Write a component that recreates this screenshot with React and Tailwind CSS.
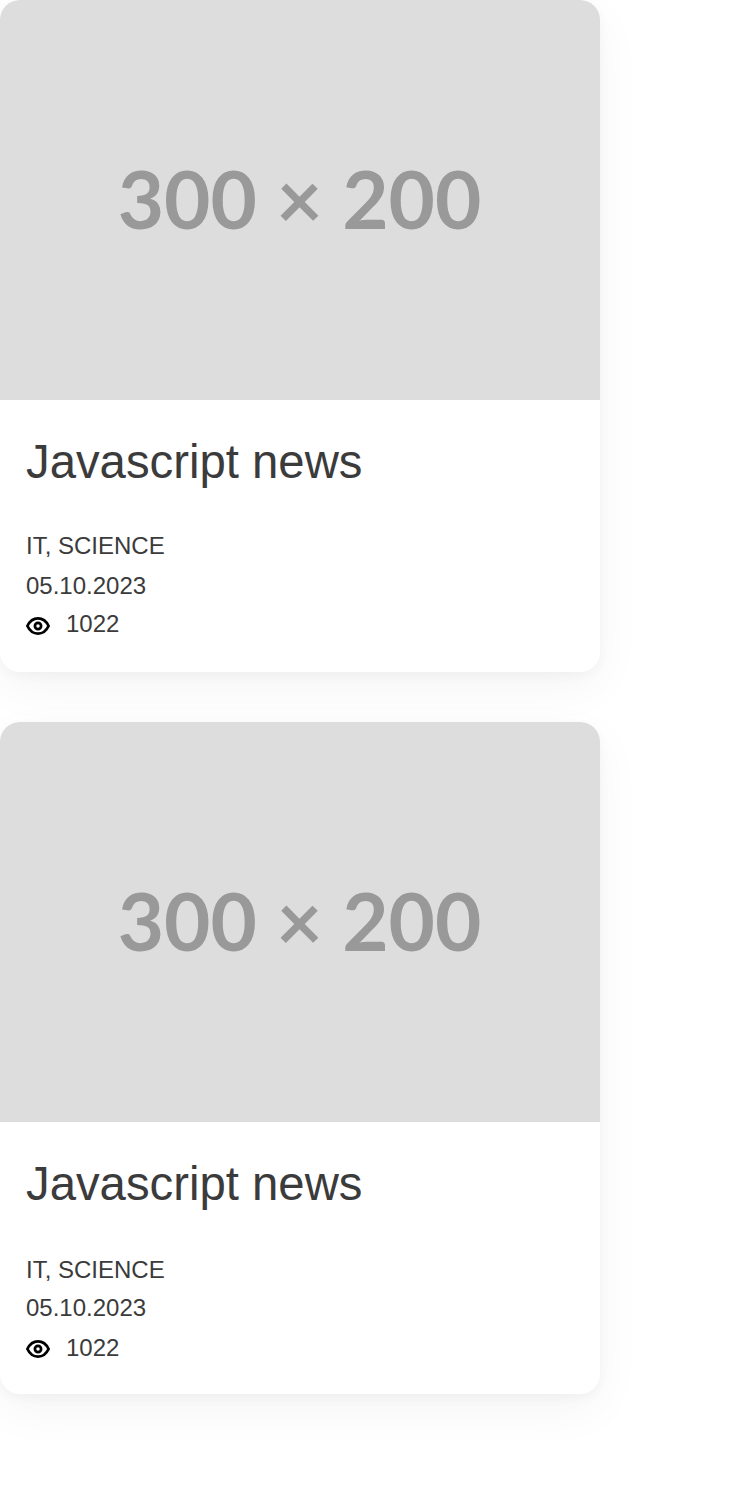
function Eye() {
  return (
    <svg className="h-6 w-6 shrink-0" viewBox="0 0 24 24" fill="none" stroke="#000">
      <path d="M1.4 12C3.7 7.200 7.5 4.400 12 4.400S20.300 7.200 22.600 12C20.300 16.800 16.500 19.600 12 19.600S3.700 16.800 1.400 12Z" strokeWidth="2.8" strokeLinejoin="round" />
      <circle cx="12" cy="12" r="3.1" strokeWidth="2.700" />
    </svg>
  );
}

function Card({ second }) {
  return (
    <article className="h-[672px] w-[600px] overflow-hidden rounded-[20px] bg-white text-[#3b3b3b] shadow-[0_4px_12px_rgba(0,0,0,0.035),0_16px_48px_rgba(0,0,0,0.045)]">
      <div className="flex h-[400px] items-center justify-center bg-[#ddd] pr-px pb-1 font-['Lato',sans-serif] text-[80px] leading-none font-bold text-[#999]">
        <span>300 × 200</span>
      </div>
      <div className="px-[26px] pt-[34px]">
        <h2 className="text-[47.3px] leading-[56px]">Javascript news</h2>
        <div className={second ? "pt-[44px]" : "pt-[42px]"}>
          <p className="text-2xl leading-7">IT, SCIENCE</p>
          <p className={second ? "mt-[10px] text-2xl leading-7" : "mt-3 text-2xl leading-7"}>05.10.2023</p>
          <div className={second ? "mt-3 flex gap-4" : "mt-[10px] flex gap-4"}>
            <div className={second ? "pt-[3px]" : "pt-1"}><Eye /></div>
            <span className="text-2xl leading-7">1022</span>
          </div>
        </div>
      </div>
    </article>
  );
}

export default function App() {
  return (
    <main className="flex min-h-[1498px] w-[750px] flex-col gap-[50px] overflow-hidden bg-white font-['Liberation_Sans',Arial,sans-serif]">
      <Card />
      <Card second />
    </main>
  );
}
